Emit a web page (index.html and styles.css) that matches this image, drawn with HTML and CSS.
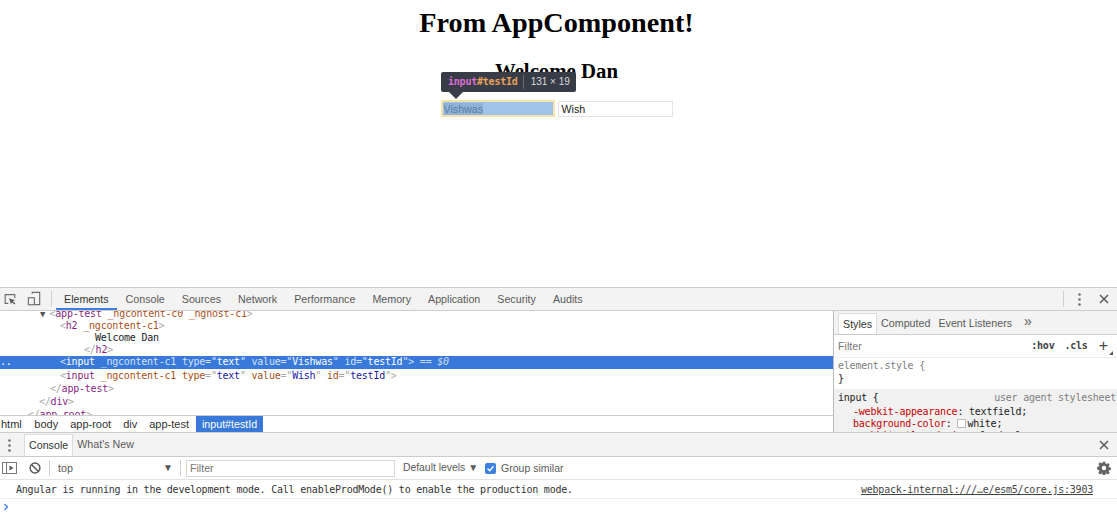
FILE: index.html
```html
<!DOCTYPE html>
<html lang="en">
<head>
<meta charset="utf-8">
<title>From AppComponent!</title>
<link rel="stylesheet" href="styles.css">
</head>
<body>
<main class="page">
  <h1 class="title">From AppComponent!</h1>
  <h2 class="welcome">Welcome Dan</h2>
  <div class="inputs">
    <div class="field field-hl"><span class="field-sel">Vishwas</span></div>
    <div class="field">Wish</div>
  </div>
  <div class="tip"><span class="tip-tag">input</span><span class="tip-id">#testId</span><span class="tip-sep"></span><span class="tip-size">131 × 19</span></div>
  <div class="tip-arrow"></div>
</main>
<section class="devtools">
  <div class="tabbar">
    <svg class="ic ic-inspect" width="14" height="14" viewBox="0 0 16 16"><path d="M6 13H2.500V3h11v4" fill="none" stroke="#6e6e6e" stroke-width="1.300"/><path d="M7 7l2 7 1.300-2.400L13 14.200l1-1-2.700-2.600 2.400-1.300z" fill="#5a5a5a"/></svg>
    <svg class="ic ic-device" width="14" height="16" viewBox="0 0 16 18"><path d="M6 3V1.500h8.500V15.500H9" fill="none" stroke="#6e6e6e" stroke-width="1.300"/><rect x="1.600" y="7.600" width="6.800" height="8" fill="none" stroke="#6e6e6e" stroke-width="1.300"/></svg>
    <span class="vsep vsep-a"></span>
    <nav class="tabs">
      <span class="tab tab-on">Elements</span><span class="tab">Console</span><span class="tab">Sources</span><span class="tab">Network</span><span class="tab">Performance</span><span class="tab">Memory</span><span class="tab">Application</span><span class="tab">Security</span><span class="tab">Audits</span>
    </nav>
    <span class="spacer"></span>
    <span class="vsep"></span>
    <svg class="ic ic-dots" width="3" height="13" viewBox="0 0 3 13"><circle cx="1.500" cy="1.500" r="1.300" fill="#6e6e6e"/><circle cx="1.500" cy="6.500" r="1.300" fill="#6e6e6e"/><circle cx="1.500" cy="11.500" r="1.300" fill="#6e6e6e"/></svg>
    <svg class="ic ic-close" width="10" height="10" viewBox="0 0 10 10"><path d="M1 1l8 8M9 1l-8 8" stroke="#5a5a5a" stroke-width="1.500"/></svg>
  </div>
  <div class="split">
    <div class="elements">
      <div class="tree">
        <div class="row row-first i1"><span class="arrow">▼</span><span class="p">&lt;</span><span class="t">app-test</span> <span class="a">_ngcontent-c0</span> <span class="a">_nghost-c1</span><span class="p">&gt;</span></div>
        <div class="row i2"><span class="p">&lt;</span><span class="t">h2</span> <span class="a">_ngcontent-c1</span><span class="p">&gt;</span></div>
        <div class="row i3">Welcome Dan</div>
        <div class="row i4"><span class="p">&lt;/</span><span class="t">h2</span><span class="p">&gt;</span></div>
        <div class="row row-sel i2"><span class="dots">..</span><span class="p">&lt;</span><b>input</b> <span class="a">_ngcontent-c1</span> <span class="a">type</span><span class="p">="</span><b>text</b><span class="p">"</span> <span class="a">value</span><span class="p">="</span><b>Vishwas</b><span class="p">"</span> <span class="a">id</span><span class="p">="</span><b>testId</b><span class="p">"&gt;</span> <i>== $0</i></div>
        <div class="row row-tall i2"><span class="p">&lt;</span><span class="t">input</span> <span class="a">_ngcontent-c1</span> <span class="a">type</span><span class="p">="</span><span class="v">text</span><span class="p">"</span> <span class="a">value</span><span class="p">="</span><span class="v">Wish</span><span class="p">"</span> <span class="a">id</span><span class="p">="</span><span class="v">testId</span><span class="p">"&gt;</span></div>
        <div class="row row-tall i5"><span class="p">&lt;/</span><span class="t">app-test</span><span class="p">&gt;</span></div>
        <div class="row row-tall i6"><span class="p">&lt;/</span><span class="t">div</span><span class="p">&gt;</span></div>
        <div class="row row-tall i7"><span class="p">&lt;/</span><span class="t">app-root</span><span class="p">&gt;</span></div>
      </div>
      <div class="crumbs"><span class="crumb">html</span><span class="crumb">body</span><span class="crumb">app-root</span><span class="crumb">div</span><span class="crumb">app-test</span><span class="crumb crumb-on">input#testId</span></div>
    </div>
    <aside class="side">
      <div class="side-tabs"><span class="stab stab-on">Styles</span><span class="stab">Computed</span><span class="stab">Event Listeners</span><span class="stab stab-more">»</span></div>
      <div class="side-filter"><span class="sf-label">Filter</span><span class="spacer"></span><span class="sf-btn">:hov</span><span class="sf-btn">.cls</span><span class="sf-plus">+</span></div>
      <div class="rule"><div class="rl"><span class="grey">element.style {</span></div><div class="rl">}</div></div>
      <div class="rule rule-ua">
        <div class="rl rl-head"><span>input {</span><span class="grey">user agent stylesheet</span></div>
        <div class="rl decl"><span class="prop">-webkit-appearance</span>: textfield;</div>
        <div class="rl decl"><span class="prop">background-color</span>: <span class="swatch"></span>white;</div>
        <div class="rl decl"><span class="prop">-webkit-rtl-ordering</span>: logical;</div>
      </div>
    </aside>
  </div>
  <div class="drawer">
    <svg class="ic ic-ddots" width="3" height="13" viewBox="0 0 3 13"><circle cx="1.500" cy="1.500" r="1.300" fill="#6e6e6e"/><circle cx="1.500" cy="6.500" r="1.300" fill="#6e6e6e"/><circle cx="1.500" cy="11.500" r="1.300" fill="#6e6e6e"/></svg>
    <span class="dtab dtab-on">Console</span><span class="dtab">What's New</span>
    <span class="spacer"></span>
    <svg class="ic ic-close2" width="10" height="10" viewBox="0 0 10 10"><path d="M1 1l8 8M9 1l-8 8" stroke="#5a5a5a" stroke-width="1.500"/></svg>
  </div>
  <div class="ctoolbar">
    <svg class="ic ic-side" width="15" height="12" viewBox="0 0 15 12"><rect x=".5" y=".5" width="14" height="11" fill="none" stroke="#777"/><path d="M4.500 0v12" stroke="#777"/><path d="M7.500 3.500l4 2.500-4 2.500z" fill="#555"/></svg>
    <svg class="ic ic-clear" width="12" height="12" viewBox="0 0 12 12"><circle cx="6" cy="6" r="4.900" fill="none" stroke="#5a5a5a" stroke-width="1.500"/><path d="M2.500 2.500l7 7" stroke="#5a5a5a" stroke-width="1.500"/></svg>
    <span class="vsep vsep-c"></span>
    <span class="ctx">top</span><span class="tri">▼</span>
    <span class="vsep vsep-d"></span>
    <span class="cfilter">Filter</span>
    <span class="levels">Default levels <span class="tri2">▼</span></span>
    <span class="check"><svg width="11" height="11" viewBox="0 0 11 11"><path d="M2.500 5.500l2.200 2.300 3.800-4.600" fill="none" stroke="#fff" stroke-width="1.400"/></svg></span>
    <span class="group">Group similar</span>
    <span class="spacer"></span>
    <svg class="ic ic-gear" width="14" height="14" viewBox="0 0 14 14"><path fill-rule="evenodd" fill="#666" d="M5.800.8h2.400l.3 1.800 1 .4 1.500-1 1.700 1.700-1 1.500.4 1 1.800.3v2.400l-1.800.3-.4 1 1 1.500-1.700 1.700-1.500-1-1 .4-.3 1.800H5.800l-.3-1.800-1-.4-1.500 1-1.700-1.700 1-1.500-.4-1L.1 8.200V5.800l1.800-.3.400-1-1-1.500L3 1.300l1.500 1 1-.4zM7 4.800a2.200 2.200 0 1 0 0 4.400 2.200 2.200 0 0 0 0-4.400z"/></svg>
  </div>
  <div class="msg"><span>Angular is running in the development mode. Call enableProdMode() to enable the production mode.</span><span class="src">webpack-internal:///…e/esm5/core.js:3903</span></div>
  <div class="prompt"><svg width="6" height="8" viewBox="0 0 6 8"><path d="M1.500 1l3 3-3 3" fill="none" stroke="#3b7fe0" stroke-width="1.300"/></svg></div>
</section>
</body>
</html>
```

FILE: styles.css
```css
* { box-sizing: border-box; }
html, body { margin: 0; height: 513px; overflow: hidden; background: #fff; }
body { display: flex; flex-direction: column; }

.page { position: relative; height: 287px; flex: none; font-family: "Liberation Serif", serif; color: #000; text-align: center; }
.title { margin: 0; padding: 6px 4px 0 0; font-size: 28.200px; line-height: 34px; font-weight: bold; }
.welcome { margin: 0; padding: 18px 4px 0 0; font-size: 20.800px; line-height: 26px; font-weight: bold; }
.inputs { display: flex; justify-content: center; gap: 3px; padding-top: 17px; padding-right: 4px; font: 10.700px/15px "Liberation Sans", sans-serif; }
.field { width: 115px; height: 16px; border: 1px solid #e4e4e4; text-align: left; padding-left: 3px; line-height: 15px; color: #222; }
.field-hl { width: 114px; height: 17px; margin-top: -1px; border: 2px solid #f6e3ab; background: #9fc4e8; padding-left: 1px; color: #5c7ea3; line-height: 14px; }
.field-sel { background: #8fb2d8; }

.tip { position: absolute; left: 441px; top: 72px; width: 135px; height: 20px; background: #383c47; border-radius: 2px; display: flex; align-items: center; padding-left: 7px; font: bold 10px/20px "DejaVu Sans Mono", monospace; letter-spacing: -.22px; text-align: left; }
.tip-tag { color: #d96fd0; }
.tip-id { color: #e8a25c; }
.tip-sep { width: 1px; height: 14px; background: #666a75; margin: 0 7px 0 5px; }
.tip-size { color: #d8dade; font: 10px/20px "Liberation Sans", sans-serif; letter-spacing: 0; }
.tip-arrow { position: absolute; left: 449px; top: 92px; width: 0; height: 0; border-left: 7px solid transparent; border-right: 7px solid transparent; border-top: 7px solid #383c47; }

.devtools { height: 226px; flex: none; display: flex; flex-direction: column; font: 10.700px/14px "Liberation Sans", sans-serif; color: #333; }
.spacer { flex: 1; }
.ic { flex: none; display: block; }

.tabbar { height: 24px; flex: none; display: flex; align-items: center; background: #f3f3f3; border-top: 1px solid #ccc; border-bottom: 1px solid #ccc; }
.ic-inspect { margin-left: 3px; }
.ic-device { margin-left: 10px; }
.vsep { width: 1px; height: 16px; background: #d0d0d0; flex: none; }
.vsep-a { margin-left: 10px; }
.tabs { display: flex; margin-left: 4px; height: 22px; align-items: stretch; }
.tab { padding: 0 8px; line-height: 22px; color: #5a5a5a; margin-right: 1px; white-space: nowrap; }
.tab-on { color: #333; box-shadow: inset 0 -2px 0 #3b7fe0; }
.ic-dots { margin-left: 14px; }
.ic-close { margin-left: 18px; margin-right: 8px; }

.split { height: 122px; flex: none; display: flex; border-bottom: 1px solid #ccc; }
.elements { width: 834px; flex: none; display: flex; flex-direction: column; border-right: 1px solid #bbb; min-height: 0; }
.tree { height: 104px; flex: none; overflow: hidden; font: 10px/12px "DejaVu Sans Mono", monospace; letter-spacing: -.22px; color: #222; position: relative; }
.row { white-space: pre; height: 12px; position: relative; }
.row-tall { height: 13px; line-height: 13px; }
.row-first { margin-top: -3px; }
.i1 { padding-left: 40px; }
.i2 { padding-left: 60px; }
.i3 { padding-left: 95px; }
.i4 { padding-left: 84px; }
.i5 { padding-left: 50px; }
.i6 { padding-left: 39px; }
.i7 { padding-left: 28px; }
.arrow { display: inline-block; width: 9.500px; color: #555; font-size: 9px; }
.p { color: #a8a8a8; }
.t { color: #8a1f82; }
.a { color: #a8501a; }
.v { color: #1a1aa6; }
.row-sel { background: #3879d9; color: #fff; height: 12.500px; }
.row-sel .p, .row-sel .a { color: #d4e2f6; }
.row-sel b { font-weight: normal; color: #fff; }
.row-sel i { color: #cbdcf5; font-style: italic; }
.dots { position: absolute; left: 0; color: #fff; }
.crumbs { height: 17px; flex: none; display: flex; background: #fff; border-top: 1px solid #ccc; font-size: 11px; line-height: 16px; color: #333; }
.crumb { padding: 0 6px; white-space: nowrap; }
.crumb:first-child { padding-left: 1px; padding-right: 6.500px; }
.crumb-on { background: #3879d9; color: #fff; padding: 0 6px; margin-left: 1px; font-size: 10.700px; }

.side { flex: 1; min-width: 0; overflow: hidden; display: flex; flex-direction: column; }
.side-tabs { height: 24px; flex: none; display: flex; align-items: stretch; background: #f3f3f3; border-bottom: 1px solid #ccc; padding-left: 4px; padding-top: 2px; line-height: 21px; }
.stab { padding: 0 4px; color: #5a5a5a; }
.stab-on { background: #fff; color: #333; border: 1px solid #ddd; border-bottom: 0; line-height: 20px; }
.stab-more { padding-left: 8px; font-size: 14px; line-height: 17px; }
.side-filter { height: 23px; flex: none; display: flex; align-items: center; padding-left: 4px; border-bottom: 1px solid #eee; color: #777; }
.sf-btn { font: bold 10px/14px "DejaVu Sans Mono", monospace; letter-spacing: -.22px; color: #444; margin-right: 10px; }
.sf-plus { position: relative; font-size: 16px; color: #444; margin-right: 9px; margin-left: 1px; }
.sf-plus::after { content: ""; position: absolute; right: -5px; bottom: -2px; border-left: 4px solid transparent; border-bottom: 4px solid #555; }
.rule { font: 10px/12.500px "DejaVu Sans Mono", monospace; letter-spacing: -.22px; padding: 2px 0 3px 4px; color: #222; }
.rule-ua { background: #f1f1f1; padding-top: 3px; }
.rl { white-space: nowrap; height: 13px; }
.rl-head { display: flex; justify-content: space-between; padding-right: 1px; margin-bottom: 1px; }
.grey { color: #808080; }
.decl { padding-left: 15px; height: 12px; line-height: 12px; }
.prop { color: #c80000; }
.swatch { display: inline-block; width: 9px; height: 9px; background: #fff; border: 1px solid #bbb; margin-right: 1px; vertical-align: -1px; }

.drawer { height: 24px; flex: none; display: flex; align-items: stretch; background: #f3f3f3; border-bottom: 1px solid #ccc; padding-top: 1px; }
.ic-ddots { margin: 5px 8px 0 8px; }
.dtab { padding: 0 4px; line-height: 21px; color: #5a5a5a; }
.dtab-on { background: #fff; color: #333; margin-left: 5px; padding: 0 4px; border: 1px solid #ddd; border-bottom: 0; }
.ic-close2 { margin: 6px 8px 0 0; }

.ctoolbar { height: 23px; flex: none; display: flex; align-items: center; background: #fff; border-bottom: 1px solid #e3e3e3; color: #5a5a5a; }
.ic-side { margin-left: 2px; }
.ic-clear { margin-left: 12px; }
.vsep-c { margin-left: 8px; }
.ctx { margin-left: 8px; width: 105px; }
.tri { font-size: 10px; color: #555; }
.vsep-d { margin-left: 7px; }
.cfilter { width: 209px; height: 17px; margin-left: 5px; border: 1px solid #d8d8d8; padding-left: 3px; line-height: 15px; color: #777; }
.levels { margin-left: 8px; white-space: pre; font-size: 10.400px; }
.tri2 { font-size: 10px; }
.check { width: 11px; height: 11px; margin-left: 7px; background: #3b7fe0; border-radius: 2px; display: flex; }
.group { margin-left: 5px; font-size: 10.500px; }
.ic-gear { margin-right: 6px; }

.msg { height: 19px; flex: none; display: flex; justify-content: space-between; padding: 1px 24px 0 16px; border-bottom: 1px solid #f0f0f0; font: 10px/18px "DejaVu Sans Mono", monospace; letter-spacing: -.22px; color: #333; white-space: nowrap; }
.src { text-decoration: underline; color: #444; }
.prompt { flex: 1; padding: 4px 0 0 3px; }
.prompt svg { display: block; }
```
